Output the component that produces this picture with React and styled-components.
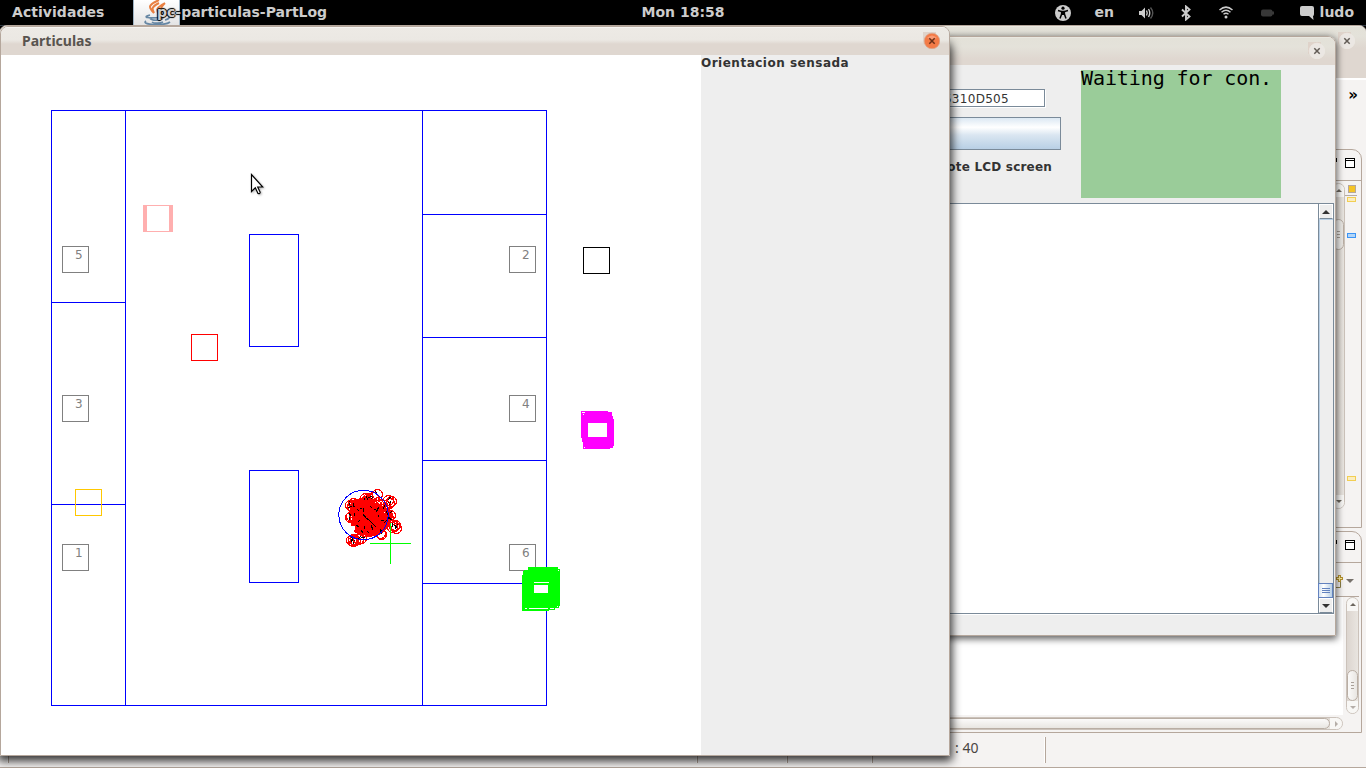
import React from "react";
import styled, { createGlobalStyle, css } from "styled-components";

const Global = createGlobalStyle`
  * { box-sizing: border-box; }
  html, body { margin: 0; padding: 0; background: #000; overflow: hidden; }
`;

const edge = "#b5a79c";

const Desktop = styled.div`
  position: relative;
  width: 1366px;
  height: 768px;
  overflow: hidden;
  background: #000;
  font-family: "DejaVu Sans", sans-serif;
`;

/* ---------- top panel ---------- */
const TopBar = styled.header`
  display: grid;
  grid-template-columns: 1fr auto 1fr;
  align-items: start;
  height: 26px;
  border-bottom: 1px solid #333c45;
  color: #ccc;
  font-size: 14px;
  font-weight: bold;
  line-height: 24px;
`;
const BarLeft = styled.div`
  display: flex;
  padding-left: 12px;
  height: 25px;
`;
const Activities = styled.span`
  width: 121px;
  letter-spacing: 0.05px;
`;
const AppTile = styled.div`
  width: 47px;
  height: 25px;
  background: linear-gradient(#fff, #e4e4e4);
  border: solid #9fb4c4;
  border-width: 0 1px;
`;
const AppName = styled.span`
  margin-left: -23px;
  position: relative;
  letter-spacing: 0;
  text-shadow: 1px 0 1px #000, -1px 0 1px #000, 0 1px 1px #000, 0 -1px 1px #000;
`;
const BarRight = styled.div`
  display: flex;
  justify-content: flex-end;
  align-items: start;
  height: 25px;
  padding-right: 12px;
`;
const Slot = styled.span`
  display: flex;
  align-items: center;
  width: ${(p) => p.$w}px;
  height: ${(p) => (p.$text ? 24 : 25)}px;
`;

/* ---------- shared window parts ---------- */
const Frame = styled.section`
  position: absolute;
  left: ${(p) => p.$x}px;
  top: ${(p) => p.$y}px;
  width: ${(p) => p.$w}px;
  height: ${(p) => p.$h}px;
  display: flex;
  flex-direction: column;
  border: 1px solid ${edge};
  border-radius: 8px 8px 0 0;
  overflow: hidden;
  background: #eee;
`;
const Shadow = styled.div`
  position: absolute;
  left: ${(p) => p.$x}px;
  top: ${(p) => p.$y}px;
  width: ${(p) => p.$w}px;
  height: ${(p) => p.$h}px;
  border-radius: 8px 8px 0 0;
  box-shadow: ${(p) => (p.$strong ? "0 3px 10px 2px rgba(0,0,0,.8)" : "0 2px 7px 1px rgba(0,0,0,.62)")};
`;
const TitleBar = styled.div`
  flex: none;
  display: flex;
  justify-content: space-between;
  height: ${(p) => p.$h}px;
  padding: ${(p) => p.$top || 5}px ${(p) => p.$right}px 0 21px;
  background: ${(p) =>
    p.$active
      ? "linear-gradient(#fff 0, #edeae5 1px, #ebe8e3 13px, #dfd7d0 17px, #dfd7d0 100%)"
      : "linear-gradient(#f1efe9 0, #e3e1d8 1px, #e4e2da 10px, #dfd7d0 22px, #dfd7d0 100%)"};
  color: #59544f;
  font: bold 14px/17px "Noto Sans", sans-serif;
`;
const CloseSvg = ({ active }) => (
  <svg width="17" height="17" viewBox="0 0 17 17">
    <rect width="13" height="12" fill="#dfd3ca" />
    <circle cx="9" cy="9" r="7.8" fill={active ? "#f37b47" : "#ebe7e3"} stroke={active ? "#d9a78f" : "#eee9e4"} strokeWidth=".7" />
    {active && <path d="M4 6 Q9 1 14 6 Q9 8 4 6" fill="#f99b75" />}
    <path d="M6.3 6.3 L11.7 11.7 M11.7 6.3 L6.3 11.7" stroke={active ? "#6a3019" : "#625c56"} strokeWidth="1.5" />
  </svg>
);

/* ---------- IDE window ---------- */
const IdeBar = styled.div`
  height: 71px;
  flex: none;
  padding: 6px 8px 0 0;
  border-top: 2px solid #fff;
  background: #f5f3f2;
  text-align: right;
  font: bold 15px/19px "DejaVu Sans", sans-serif;
`;
const Work = styled.div`
  display: flex;
  flex-direction: column;
  gap: 3px;
  height: 584px;
  flex: none;
  padding-right: 4px;
  background: #f5f3f2;
`;
const Pane = styled.div`
  display: flex;
  flex-direction: column;
  height: ${(p) => p.$h}px;
  border: 1px solid ${edge};
  border-top-right-radius: 10px;
`;
const PaneHead = styled.div`
  flex: none;
  display: flex;
  justify-content: flex-end;
  gap: 8px;
  height: 31px;
  padding: 8px 6px 0 0;
  border-bottom: 1px solid ${edge};
`;
const MiniBox = styled.i`
  width: 10px;
  height: ${(p) => (p.$flat ? 4 : 10)}px;
  border: 1px solid #000;
  background: ${(p) => (p.$flat ? "#fff" : "linear-gradient(#fff 1px,#000 1px,#000 2px,#fff 2px)")};
`;
const EditorRow = styled.div`
  flex: 1;
  display: flex;
  justify-content: flex-end;
  padding-top: 2px;
`;
const RoundTrack = styled.div`
  flex: none;
  display: flex;
  flex-direction: ${(p) => (p.$row ? "row" : "column")};
  align-items: center;
  overflow: hidden;
  width: ${(p) => p.$w}px;
  height: ${(p) => p.$h}px;
  border: 1px solid #cbc2ba;
  border-radius: 7px;
  background: linear-gradient(${(p) => (p.$row ? "180deg" : "90deg")}, #dcd5cf, #e9e5e0);
`;
const Cap = styled.div`
  flex: none;
  display: grid;
  place-items: center;
  ${(p) => (p.$row ? css`width: 13px; height: 100%;` : css`height: 13px; width: 100%;`)}
  background: #f8f7f5;
`;
const Thumb = styled.div`
  flex: none;
  display: grid;
  place-items: center;
  margin-top: ${(p) => p.$gap || 0}px;
  width: ${(p) => p.$w || "100%"};
  height: ${(p) => p.$h};
  border: 1px solid #b9aea4;
  border-radius: 6px;
  background: linear-gradient(${(p) => (p.$row ? "180deg" : "90deg")}, #fbfaf9, #e9e6e2);
`;
const Spring = styled.div`
  flex: 1;
`;
const Grip = styled.i`
  width: 3px;
  height: 7px;
  background: repeating-linear-gradient(#a9a098 0, #a9a098 1px, transparent 1px, transparent 3px);
`;
const Arrow = styled.i`
  width: 0;
  height: 0;
  border: ${(p) => p.$s || 3}px solid transparent;
  ${(p) => p.$dir === "up" && css`border-top-width: 0; border-bottom-color: ${p.$c || "#6d675f"};`}
  ${(p) => p.$dir === "down" && css`border-bottom-width: 0; border-top-color: ${p.$c || "#6d675f"};`}
  ${(p) => p.$dir === "right" && css`border-right-width: 0; border-left-color: ${p.$c || "#6d675f"};`}
`;
const Ruler = styled.div`
  width: 16px;
  padding-left: 2px;
  display: flex;
  flex-direction: column;
`;
const Summary = styled.i`
  width: 8px;
  height: 8px;
  margin: 2px 0 0 1px;
  border: 1px solid #b5a79c;
  background: #f5c426;
`;
const RulerLine = styled.i`
  width: 12px;
  height: 1px;
  margin: 2px 0 1px -2px;
  background: #b5aaa2;
`;
const Mark = styled.i`
  width: 9px;
  height: 5px;
  margin-top: ${(p) => p.$gap}px;
  border: 1px solid ${(p) => (p.$blue ? "#3c94f5" : "#f2ce53")};
  background: ${(p) => (p.$blue ? "#b3d5f7" : "#fbedbf")};
`;
const ViewTools = styled.div`
  flex: none;
  display: flex;
  justify-content: flex-end;
  align-items: center;
  gap: 3px;
  height: 34px;
  margin-right: 2px;
  padding: 3px 5px 0 0;
  border-bottom: 1px solid ${edge};
`;
const ConsoleRow = styled.div`
  display: flex;
  height: 118px;
  padding-right: 2px;
  flex: none;
`;
const ConsoleText = styled.div`
  flex: 1;
  background: #fff;
  margin-right: 3px;
`;
const HScrollRow = styled.div`
  display: flex;
  justify-content: flex-end;
  padding: 2px 18px 0 0;
`;
const Status = styled.div`
  flex: 1;
  display: flex;
  padding-top: 4px;
  background: #f5f3f2;
  border-bottom: 1px solid ${edge};
  color: #494542;
  font: 14px/22px "Noto Sans", sans-serif;
`;
const StatusCell = styled.span`
  width: ${(p) => p.$w}px;
  height: 26px;
  padding-left: ${(p) => p.$pad || 0}px;
  border-right: 1px solid ${edge};
  box-shadow: inset -1px 0 #fff;
`;

/* ---------- remote LCD window ---------- */
const LcdTop = styled.div`
  flex: none;
  display: flex;
  justify-content: flex-end;
  height: 138px;
  padding: 5px 54px 0 0;
  color: #333;
`;
const Controls = styled.div`
  display: flex;
  flex-direction: column;
  align-items: flex-end;
  width: 300px;
  margin-right: 20px;
  padding-top: 19px;
`;
const Field = styled.div`
  width: 160px;
  height: 18px;
  margin-right: 16px;
  padding-right: 35px;
  text-align: right;
  border: 1px solid #7a8a99;
  box-shadow: 1px 1px #fff;
  background: #fff;
  font-size: 12px;
  line-height: 18px;
  letter-spacing: 0.3px;
`;
const SteelButton = styled.div`
  width: 160px;
  height: 33px;
  margin-top: 10px;
  border: 1px solid #7a8a99;
  background: linear-gradient(#dce8f3, #fff 30%, #dae6f1 55%, #b8cfe5);
`;
const Label = styled.div`
  color: #333;
  font-size: 12px;
  font-weight: bold;
  line-height: 16px;
  letter-spacing: ${(p) => p.$ls || 0}px;
  white-space: nowrap;
  margin: ${(p) => p.$m || 0};
`;
const Lcd = styled.div`
  width: 200px;
  height: 128px;
  background: #9acc99;
  color: #000;
  font: 20px/16px "DejaVu Sans Mono", monospace;
  letter-spacing: -0.1px;
  white-space: pre;
`;
const LogArea = styled.div`
  flex: none;
  display: flex;
  height: 411px;
  margin-right: 1px;
  background: #fff;
  border: solid #7a8a99;
  border-width: 1px 1px 1px 0;
  box-shadow: 0 1px #fff;
`;
const LogText = styled.div`
  flex: 1;
`;
const SteelScroll = styled.div`
  width: 15px;
  display: flex;
  flex-direction: column;
  border-left: 1px solid #7a8a99;
  background: #eee;
`;
const SteelTrack = styled.div`
  flex: 1;
  border-left: 1px solid #b8cfe5;
  border-top: 1px solid #b8cfe5;
`;
const SteelCap = styled.div`
  height: 15px;
  display: grid;
  place-items: center;
  border: 1px solid #fff;
  border-bottom-color: #7a8a99;
`;
const SteelThumb = styled.div`
  height: 15px;
  padding: 4px 2px;
  margin-left: -1px;
  border: 1px solid #6382bf;
  background: linear-gradient(90deg, #d5e3f2, #fff 35%, #b8cfe5);
  i {
    display: block;
    height: 5px;
    margin-left: 1px;
    background: repeating-linear-gradient(#6382bf 0, #6382bf 1px, transparent 1px, transparent 2px);
  }
`;

/* ---------- particle window ---------- */
const Body = styled.div`
  display: flex;
  flex: 1;
`;
const Field2D = styled.svg`
  display: block;
  flex: none;
  width: 700px;
  height: 700px;
  background: #fff;
`;
const Side = styled.div`
  flex: 1;
  background: #eee;
`;
const Cursor = styled.svg`
  position: absolute;
  left: 250px;
  top: 173px;
  filter: drop-shadow(1px 1px 1px rgba(0, 0, 0, 0.3));
`;

const numbered = [
  [62, 246, "5"], [62, 395, "3"], [62, 544, "1"],
  [509, 246, "2"], [509, 395, "4"], [509, 544, "6"],
];

function makeParticles() {
  let s = 4217;
  const rnd = () => ((s = (s * 16807) % 2147483647) / 2147483647);
  const core = Array.from({ length: 90 }, () => {
    const a = rnd() * Math.PI * 2;
    const d = Math.sqrt(rnd());
    return [Math.round(371 + Math.cos(a) * d * 17), Math.round(516 + Math.sin(a) * d * 16)];
  });
  const rim = [
    [351, 540], [353, 539], [355, 540], [358, 539], [361, 538], [353, 541],
    [396, 528], [394, 526], [392, 527], [395, 525], [391, 501], [389, 503], [388, 500],
    [377, 494], [373, 497], [365, 498], [368, 498], [350, 517], [351, 516], [350, 505], [352, 506], [353, 503],
    [381, 534], [380, 533], [390, 515], [388, 518], [385, 505],
  ].map(([x, y]) => [x, y, rnd() * 6.28]);
  return { core, rim };
}
const cloud = makeParticles();

const Particle = ({ p: [x, y, a] }) => (
  <g>
    <circle cx={x + 0.5} cy={y + 0.5} r="5" stroke="#f00" />
    <path d={`M${x} ${y} L${x + Math.cos(a) * 4} ${y + Math.sin(a) * 4}`} stroke="#000" />
  </g>
);

const Arena = () => (
  <Field2D viewBox="1 55 700 700" fill="none" shapeRendering="crispEdges">
    <g stroke="#00f">
      <rect x="51.5" y="110.5" width="495" height="595" />
      <path d="M125.5 110V705 M422.5 110V705 M51 302.5H125 M51 504.5H125 M422 214.5H546 M422 337.5H546 M422 460.5H546 M422 583.5H546" />
      <rect x="249.5" y="234.5" width="49" height="112" />
      <rect x="249.5" y="470.5" width="49" height="112" />
    </g>
    {numbered.map(([x, y, n]) => (
      <g key={n}>
        <rect x={x + 0.5} y={y + 0.5} width="26" height="26" stroke="#808080" />
        <text x={x + 13} y={y + 13} fill="#808080" fontFamily="DejaVu Sans" fontSize="12">{n}</text>
      </g>
    ))}
    <rect x="583.5" y="247.5" width="26" height="26" stroke="#000" />
    <rect x="191.5" y="334.5" width="26" height="26" stroke="#f00" />
    <rect x="75.5" y="489.5" width="26" height="26" stroke="#ffc800" />
    <path fill="#ffafaf" fillRule="evenodd" d="M143 205H173V232H143Z M147 206V231H169V206Z" />

    <path fill="#f00" d="M351 500L362 498L372 501L382 504L389 507L392 514L391 524L385 531L374 534L364 535L355 533L351 526L352 514L350 508Z" />
    {cloud.core.map((p, i) => <circle key={i} cx={p[0] + 0.5} cy={p[1] + 0.5} r="5" stroke="#f00" />)}
    {cloud.rim.map((p, i) => <Particle key={i} p={p} />)}
    <path stroke="#000" d="M363 514L366 518L370 521L376 527 M357 509L359 511 M360 508L362 508 M364 508L363 512 M366 496L368 500 M374 509L378 511 M376 512L379 507 M378 515L378 517 M356 525L359 527 M358 522L360 520 M367 531L369 533 M371 525L373 530 M364 526V529 M381 520H384 M384 523L387 520 M388 516L391 520 M386 511L388 515 M370 506L372 508 M354 513L355 516 M361 530L363 533" />
    <path fill="#fff" d="M373 498h1v1h-1z M377 499h1v1h-1z M380 498h2v1h-2z M375 502h1v1h-1z M379 502h1v2h-1z M383 501h1v1h-1z M382 505h1v1h-1z M386 507h1v1h-1z M351 526h4v4h-4z M384 512h1v1h-1z M365 537h1v1h-1z" />
    <circle cx="363.5" cy="515" r="24.7" stroke="#00f" />
    <path stroke="#0f0" d="M390.5 523V564 M370 543.5H411" />

    <path fill="#f0f" fillRule="evenodd" d="M581 411H608V412H612V416H613V419H614V446H613V448H610V449H583V442H582V438H581Z M588 423V437H607V423Z M582 412V413H585V412Z M583 414V415H584V414Z M584 447V448H585V447Z" />
    <path fill="#0f0" d="M528 567H558V569H560V606H559V608H555V610H549V611H522V575H523V571H524V570H528Z" />
    <path fill="#fff" d="M534 585H548V593H534Z M534 582H549V583H534Z M529 608H548V609H529Z M525 608H527V609H525Z M550 608H554V609H550Z M558 570H559V571H558Z M557 606H558V607H557Z" />
  </Field2D>
);

const JavaCup = () => (
  <svg width="45" height="25" viewBox="0 0 45 25" fill="none">
    <path d="M25 0C14 5 14 7 20 13C18 9 17 7 25 3M31 3C22 8 22 9 25 15C30 11 23 10 31 3" stroke="#e98042" strokeWidth="2" />
    <path d="M16 15C8 17 13 19 29 17M16 18C17 21 27 21 29 18M18 22C20 24 27 23 29 22M31 15C38 14 36 19 31 20M12 21C6 25 31 26 36 22" stroke="#6687a4" strokeWidth="1.7" />
  </svg>
);

const Access = () => (
  <svg width="16" height="16" viewBox="0 0 16 16">
    <circle cx="8" cy="8" r="8" fill="#ccc" />
    <circle cx="8" cy="3.2" r="1.6" fill="#000" />
    <path d="M3 5.5L6.6 6.5V9L5 13.5M13 5.5L9.4 6.5V9L11 13.5M6.6 6.5H9.4M6.6 9H9.4" stroke="#000" strokeWidth="1.5" fill="none" />
    <path d="M6.3 6h3.4v4H6.3z" fill="#000" />
  </svg>
);
const Volume = () => (
  <svg width="17" height="14" viewBox="0 0 17 14" fill="none">
    <path d="M0 5H2.5L6 1.5V12.5L2.5 9H0Z" fill="#ccc" />
    <path d="M7.5 4.5Q9 7 7.5 9.5M9.5 3Q12 7 9.5 11" stroke="#ccc" strokeWidth="1.4" />
    <path d="M11.5 1.5Q16 7 11.5 12.5" stroke="#555" strokeWidth="1.4" />
  </svg>
);
const Bluetooth = () => (
  <svg width="10" height="16" viewBox="0 0 10 16" fill="none">
    <path d="M1 4.5L8.5 11.5L5 14.5V1.5L8.5 4.5L1 11.5" stroke="#ccc" strokeWidth="1.9" />
  </svg>
);
const Wifi = () => (
  <svg width="14" height="13" viewBox="0 0 14 13" fill="none" stroke="#ccc">
    <path d="M.5 4Q7-1.8 13.5 4" strokeWidth="1.5" />
    <path d="M2.5 6.2Q7 2.2 11.5 6.2" strokeWidth="1.5" />
    <path d="M4.5 8.3Q7 6.2 9.5 8.3" strokeWidth="1.4" />
    <circle cx="7" cy="11" r="1.5" fill="#ccc" stroke="none" />
  </svg>
);
const Battery = () => (
  <svg width="13" height="8" viewBox="0 0 13 8">
    <rect width="11.5" height="7" y=".5" rx="2" fill="#383838" />
    <rect x="11" y="2.5" width="2" height="3" fill="#383838" />
  </svg>
);
const Chat = () => (
  <svg width="14" height="14" viewBox="0 0 14 14">
    <path d="M2 0H12Q14 0 14 2V8Q14 10 13 10L13.5 14L9 10H2Q0 10 0 8V2Q0 0 2 0Z" fill="#ccc" />
  </svg>
);
const OpenConsole = () => (
  <svg width="9" height="15" viewBox="0 0 9 15" fill="none">
    <path d="M0 13.5H6.5V7" stroke="#8d8048" />
    <path d="M5.5 1V8M2 4.5H9" stroke="#b7932f" strokeWidth="3" />
    <path d="M5.5 2V7M3 4.5H8" stroke="#fff1a0" />
  </svg>
);

export default function App() {
  return (
    <Desktop>
      <Global />
      <TopBar>
        <BarLeft>
          <Activities>Actividades</Activities>
          <AppTile><JavaCup /></AppTile>
          <AppName>pc-particulas-PartLog</AppName>
        </BarLeft>
        <span>Mon 18:58</span>
        <BarRight>
          <Slot $w={40}><Access /></Slot>
          <Slot $w={44} $text>en</Slot>
          <Slot $w={42}><Volume /></Slot>
          <Slot $w={38}><Bluetooth /></Slot>
          <Slot $w={42}><Wifi /></Slot>
          <Slot $w={39}><Battery /></Slot>
          <Slot $w={20}><Chat /></Slot>
          <span>ludo</span>
        </BarRight>
      </TopBar>

      <Frame $x={-1} $y={25} $w={1368} $h={744}>
        <TitleBar $h={52} $right={11} $top={6}><span /><CloseSvg /></TitleBar>
        <IdeBar>»</IdeBar>
        <Work>
          <Pane $h={379}>
            <PaneHead><MiniBox $flat /><MiniBox /></PaneHead>
            <EditorRow>
              <RoundTrack $w={13} $h={326}>
                <Cap><Arrow $dir="up" /></Cap>
                <Thumb $gap={22} $h="31px"><Grip /></Thumb>
                <Spring />
                <Cap><Arrow $dir="down" /></Cap>
              </RoundTrack>
              <Ruler>
                <Summary />
                <RulerLine />
                <Mark $gap={0} />
                <Mark $gap={31} $blue />
                <Mark $gap={238} />
              </Ruler>
            </EditorRow>
          </Pane>
          <Pane $h={202}>
            <PaneHead><MiniBox $flat /><MiniBox /></PaneHead>
            <ViewTools><OpenConsole /><Arrow $dir="down" $s={4} $c="#77716b" /></ViewTools>
            <ConsoleRow>
              <ConsoleText />
              <RoundTrack $w={13} $h={117}>
                <Cap><Arrow $dir="up" /></Cap>
                <Thumb $gap={59} $h="31px"><Grip /></Thumb>
                <Cap><Arrow $dir="down" $c="#b5aea8" /></Cap>
              </RoundTrack>
            </ConsoleRow>
            <HScrollRow>
              <RoundTrack $row $w={900} $h={13}>
                <Thumb $row $w="886px" $h="100%" />
                <Cap $row><Arrow $dir="right" $c="#b5aea8" /></Cap>
              </RoundTrack>
            </HScrollRow>
          </Pane>
        </Work>
        <Status>
          <StatusCell $w={9} />
          <StatusCell $w={689} />
          <StatusCell $w={90} />
          <StatusCell $w={85} />
          <StatusCell $w={173} $pad={82}>: 40</StatusCell>
        </Status>
      </Frame>

      <Shadow $x={560} $y={36} $w={776} $h={600} />
      <Frame $x={560} $y={36} $w={776} $h={600}>
        <TitleBar $h={28} $right={10} $top={5}><span /><CloseSvg /></TitleBar>
        <LcdTop>
          <Controls>
            <Field>00165310D505</Field>
            <SteelButton />
            <Label $m="9px 9px 0 0" $ls={0.2}>Remote LCD screen</Label>
          </Controls>
          <Lcd>Waiting for con.</Lcd>
        </LcdTop>
        <LogArea>
          <LogText />
          <SteelScroll>
            <SteelCap><Arrow $dir="up" $s={4} $c="#333" /></SteelCap>
            <SteelTrack />
            <SteelThumb><i /></SteelThumb>
            <SteelCap><Arrow $dir="down" $s={4} $c="#333" /></SteelCap>
          </SteelScroll>
        </LogArea>
      </Frame>

      <Shadow $strong $x={0} $y={40} $w={950} $h={716} />
      <Frame $x={0} $y={26} $w={950} $h={730}>
        <TitleBar $active $h={28} $right={9}><span>Particulas</span><CloseSvg active /></TitleBar>
        <Body>
          <Arena />
          <Side><Label $ls={0.5}>Orientacion sensada</Label></Side>
        </Body>
      </Frame>

      <Cursor width="14" height="22" viewBox="0 0 14 22">
        <path d="M1.5 1.5V18.5L5.3 14.8L8 20.5Q10 21 10.2 19.3L7.7 14H12.8Z" fill="#fff" stroke="#000" strokeWidth="1.2" />
      </Cursor>
    </Desktop>
  );
}
